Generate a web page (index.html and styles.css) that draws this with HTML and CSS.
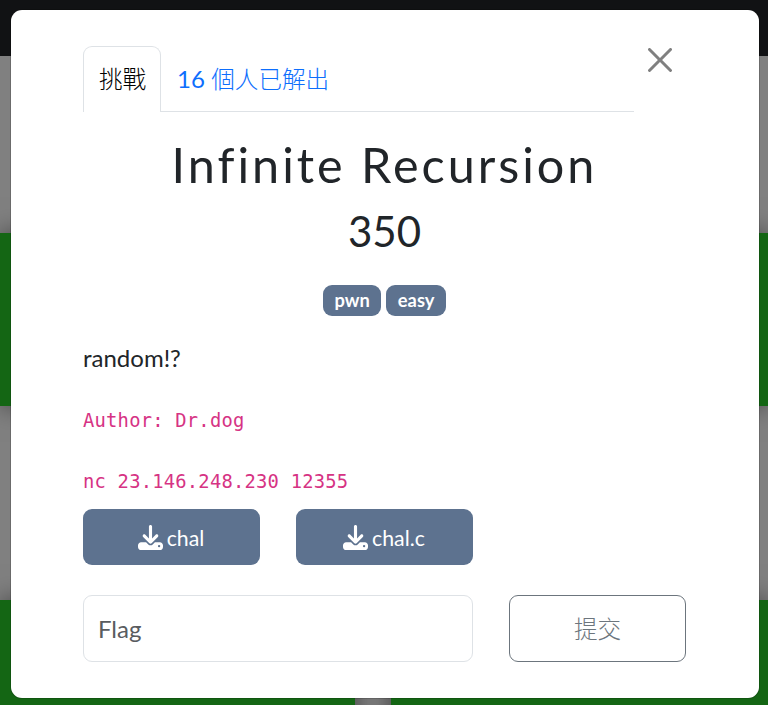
FILE: index.html
```html
<!DOCTYPE html>
<html lang="zh-Hant">
<head>
<meta charset="utf-8">
<title>Infinite Recursion</title>
<link rel="stylesheet" href="styles.css">
</head>
<body>
<div class="page">
  <div class="navbar"></div>
  <div class="board">
    <div class="tile"></div><div class="tile"></div>
    <div class="tile"></div><div class="tile"></div>
  </div>
</div>
<main class="modal">
  <div class="top">
    <nav class="tabs">
      <a class="tab active">挑戰</a>
      <a class="tab"><span class="count">16</span> 個人已解出</a>
    </nav>
    <button class="close" aria-label="Close">
      <svg viewBox="0 0 16 16"><path d="M.293.293a1 1 0 0 1 1.414 0L8 6.586 14.293.293a1 1 0 1 1 1.414 1.414L9.414 8l6.293 6.293a1 1 0 0 1-1.414 1.414L8 9.414l-6.293 6.293a1 1 0 0 1-1.414-1.414L6.586 8 .293 1.707a1 1 0 0 1 0-1.414z"/></svg>
    </button>
  </div>
  <h2 class="title">Infinite Recursion</h2>
  <h3 class="value">350</h3>
  <div class="tags"><span class="tag">pwn</span><span class="tag">easy</span></div>
  <p class="text">random!?</p>
  <p class="text"><code>Author: Dr.dog</code></p>
  <p class="text"><code>nc 23.146.248.230 12355</code></p>
  <div class="row files">
    <a class="file"><svg class="icon" viewBox="0 0 512 512"><path d="M288 32c0-17.700-14.300-32-32-32s-32 14.300-32 32V274.700l-73.400-73.400c-12.500-12.500-32.800-12.500-45.300 0s-12.500 32.800 0 45.300l128 128c12.500 12.500 32.800 12.500 45.300 0l128-128c12.500-12.500 12.500-32.800 0-45.300s-32.800-12.500-45.300 0L288 274.700V32zM64 352c-35.300 0-64 28.700-64 64v32c0 35.300 28.700 64 64 64H448c35.300 0 64-28.700 64-64V416c0-35.300-28.700-64-64-64H346.500l-45.300 45.300c-25 25-65.500 25-90.500 0L165.500 352H64zm368 56a24 24 0 1 1 0 48 24 24 0 1 1 0-48z"/></svg><span class="name">chal</span></a>
    <a class="file"><svg class="icon" viewBox="0 0 512 512"><path d="M288 32c0-17.700-14.300-32-32-32s-32 14.300-32 32V274.700l-73.400-73.400c-12.500-12.500-32.800-12.500-45.300 0s-12.500 32.800 0 45.300l128 128c12.500 12.500 32.800 12.500 45.300 0l128-128c12.500-12.500 12.500-32.800 0-45.300s-32.800-12.500-45.300 0L288 274.700V32zM64 352c-35.300 0-64 28.700-64 64v32c0 35.300 28.700 64 64 64H448c35.300 0 64-28.700 64-64V416c0-35.300-28.700-64-64-64H346.500l-45.300 45.300c-25 25-65.500 25-90.500 0L165.500 352H64zm368 56a24 24 0 1 1 0 48 24 24 0 1 1 0-48z"/></svg><span class="name">chal.c</span></a>
  </div>
  <div class="row answer">
    <input class="flag" type="text" placeholder="Flag">
    <button class="submit">提交</button>
  </div>
</main>
</body>
</html>
```

FILE: styles.css
```css
* { box-sizing: border-box; }
body {
  margin: 0;
  height: 705px;
  overflow: hidden;
  background: #808080;
  color: #212529;
  font: 24px/36px Lato, "Noto Sans CJK TC", sans-serif;
}
.page { height: 705px; overflow: hidden; }
.navbar { height: 56px; background: #111214; }
.board {
  display: grid;
  grid-template-columns: 355px 377px;
  grid-auto-rows: 173px;
  gap: 194px 36px;
  padding-top: 177px;
}
.tile { background: #146614; box-shadow: 0 0 24px rgba(0, 0, 0, .5); }
.modal {
  position: absolute;
  left: 11px;
  top: 10px;
  width: 748px;
  height: 688px;
  padding: 36px 73px 36px 72px;
  border-radius: 11px;
  background: #fff;
  box-shadow: 0 0 0 1px rgba(0, 0, 0, .16);
}
.top { display: flex; height: 66px; }
.tabs { display: flex; width: 551px; border-bottom: 1px solid #dee2e6; }
.tab {
  height: 66px;
  padding: 14px 15px 0;
  border: 1px solid transparent;
  border-bottom: 0;
  color: #0d6efd;
  font-size: 23.6px;
  font-weight: 300;
  white-space: nowrap;
}
.tab.active {
  width: 78px;
  border-color: #dee2e6;
  border-radius: 9px 9px 0 0;
  background: #fff;
  color: #000;
}
.count { font-size: 24px; font-weight: 400; }
.close { display: flex; margin: 2px 0 0 14px; padding: 0; border: 0; background: none; height: 24px; }
.close svg { width: 24px; height: 24px; fill: #808080; }
.title, .value { margin: 0; text-align: center; font-weight: 400; }
.title { margin-top: 23px; font-size: 48.5px; line-height: 58px; letter-spacing: 3px; }
.value { margin-top: 13px; font-size: 42px; line-height: 50px; }
.tags { display: flex; justify-content: center; gap: 5px; margin: 29px 0 24px; }
.tag {
  height: 31px;
  padding: 0 11.5px;
  border-radius: 9px;
  background: #5d728f;
  color: #fff;
  font-size: 18.3px;
  line-height: 31px;
  font-weight: 700;
}
.text { height: 36px; margin: 0 0 25px; }
.text code {
  display: block;
  line-height: 40px;
  color: #d63384;
  font-family: "DejaVu Sans Mono", monospace;
  font-size: 18.8px;
  letter-spacing: .23px;
}
.row { display: grid; grid-template-columns: repeat(3, 177px); column-gap: 36px; }
.files { margin-top: -14px; }
.file {
  display: flex;
  align-items: center;
  justify-content: center;
  gap: 4px;
  height: 56px;
  padding-right: 1px;
  border-radius: 9px;
  background: #5d728f;
  color: #fff;
  font-size: 21.3px;
}
.icon { width: 25px; height: 25px; fill: #fff; }
.name { padding-top: 2px; }
.answer { margin-top: 30px; }
.flag {
  grid-column: span 2;
  width: 390px;
  height: 67px;
  padding: 1px 14px;
  border: 1px solid #dee2e6;
  border-radius: 9px;
  font: inherit;
}
.flag::placeholder { color: #595c5f; opacity: 1; }
.submit {
  height: 67px;
  padding: 0 0 2px;
  border: 1px solid #6c757d;
  border-radius: 9px;
  background: #fff;
  color: #6c757d;
  font: 300 23.6px/36px "Noto Sans CJK TC", sans-serif;
}
```
